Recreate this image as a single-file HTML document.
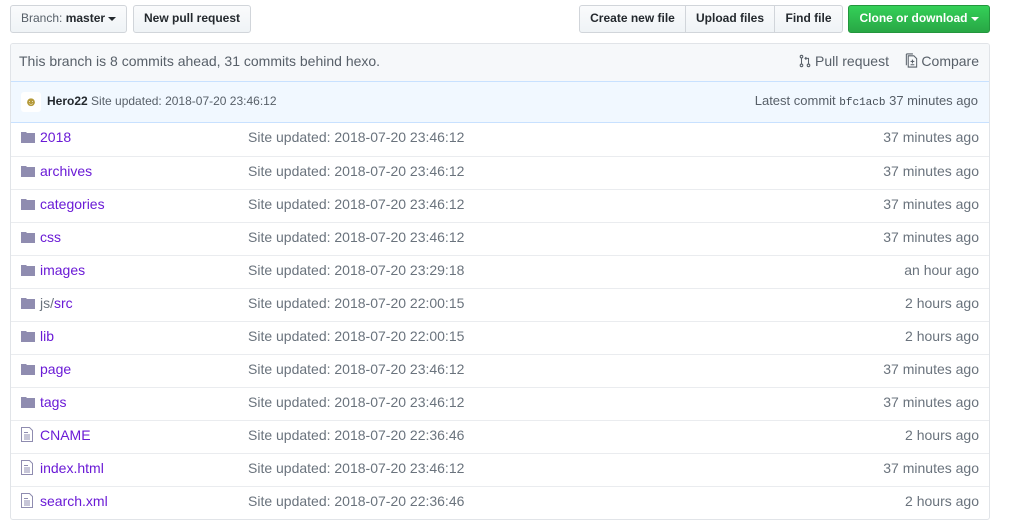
<!DOCTYPE html>
<html><head><meta charset="utf-8"><style>
*{box-sizing:border-box;margin:0;padding:0}
body{width:1022px;height:524px;background:#fff;font-family:"Liberation Sans",sans-serif;font-size:14px;color:#24292e;position:relative;overflow:hidden}
.btn{position:absolute;top:5px;height:28px;border:1px solid #d1d5da;background:linear-gradient(#fafbfc,#eff3f6);font-size:12px;font-weight:bold;line-height:25px;padding:0 10px;border-radius:3px;color:#24292e;white-space:nowrap;text-align:center}
.caret{display:inline-block;width:0;height:0;border-left:4px solid transparent;border-right:4px solid transparent;border-top:4px solid currentColor;vertical-align:middle;margin-left:3px}
.box{position:absolute;left:10px;top:43px;width:980px;height:477px;border:1px solid #e1e4e8;border-radius:3px;overflow:hidden}
.bar1{height:38px;background:#f6f8fa;border-bottom:1px solid #c8e1ff;padding:0 8px;line-height:34px;color:#586069;position:relative}
.bar2{height:41px;background:#f1f8ff;padding:0 10px;line-height:38px;font-size:12px;color:#586069;border-bottom:1px solid #c8e1ff;position:relative}
.row{height:33px;border-top:1px solid #eaecef;position:relative;line-height:29px}
.row:first-of-type{border-top:none}
.ic{position:absolute;left:10px;top:8px}
.nm{position:absolute;left:29px;color:#6a1ad6}
.msg{position:absolute;left:237px;color:#6a737d}
.age{position:absolute;right:10px;color:#6a737d}
</style></head><body>
<div class="btn" style="left:10px;width:117px;font-weight:normal;color:#586069">Branch: <b style="color:#24292e">master</b><span class="caret" style="color:#24292e"></span></div>
<div class="btn" style="left:133px;width:118px">New pull request</div>
<div class="btn" style="left:579px;width:107px;border-radius:3px 0 0 3px;padding:0">Create new file</div>
<div class="btn" style="left:685px;width:90px;border-radius:0;padding:0">Upload files</div>
<div class="btn" style="left:774px;width:69px;border-radius:0 3px 3px 0;padding:0">Find file</div>
<div class="btn" style="left:848px;width:142px;background:linear-gradient(#34d058,#28a745);border-color:#23963d;color:#fff;padding:0">Clone or download<span class="caret"></span></div>
<div class="box">
<div class="bar1">This branch is 8 commits ahead, 31 commits behind hexo.
<span style="position:absolute;right:10px;top:0">
<svg width="12" height="14" viewBox="0 0 12 16" style="vertical-align:-2px" fill="none" stroke="#586069" stroke-width="1.2"><circle cx="2" cy="3" r="1.5"/><circle cx="2" cy="13" r="1.5"/><circle cx="10" cy="13" r="1.5"/><path d="M2 4.5v7M10 11.5V5H6M7.5 3.5L6 5l1.5 1.5"/></svg> Pull request&nbsp;&nbsp;&nbsp;
<svg width="13" height="15" viewBox="0 0 13 16" style="vertical-align:-2px" fill="none" stroke="#586069" stroke-width="1.1"><path d="M3 3h6l3 3v9H3zM1 1h7M1 1v12M7.5 7v4M5.5 9h4M5.5 12.5h4"/></svg> Compare</span></div>
<div class="bar2"><span style="display:inline-block;width:20px;height:20px;background:#fff;border-radius:3px;vertical-align:middle;margin-right:6px;text-align:center;line-height:20px;font-size:13px;color:#b59a3a">&#9787;</span><b style="color:#24292e">Hero22</b> Site updated: 2018-07-20 23:46:12
<span style="position:absolute;right:11px;top:0;font-size:13px">Latest commit <code style="font-family:'Liberation Mono',monospace;font-size:11px;color:#444d56">bfc1acb</code> 37 minutes ago</span></div>
<div>
<div class="row"><svg class="ic" width="14" height="12" viewBox="0 0 14 12"><path d="M0 1h5l1 1h8v10H0z" fill="#8f8cb0"/></svg><span class="nm">2018</span><span class="msg">Site updated: 2018-07-20 23:46:12</span><span class="age">37 minutes ago</span></div>
<div class="row"><svg class="ic" width="14" height="12" viewBox="0 0 14 12"><path d="M0 1h5l1 1h8v10H0z" fill="#8f8cb0"/></svg><span class="nm">archives</span><span class="msg">Site updated: 2018-07-20 23:46:12</span><span class="age">37 minutes ago</span></div>
<div class="row"><svg class="ic" width="14" height="12" viewBox="0 0 14 12"><path d="M0 1h5l1 1h8v10H0z" fill="#8f8cb0"/></svg><span class="nm">categories</span><span class="msg">Site updated: 2018-07-20 23:46:12</span><span class="age">37 minutes ago</span></div>
<div class="row"><svg class="ic" width="14" height="12" viewBox="0 0 14 12"><path d="M0 1h5l1 1h8v10H0z" fill="#8f8cb0"/></svg><span class="nm">css</span><span class="msg">Site updated: 2018-07-20 23:46:12</span><span class="age">37 minutes ago</span></div>
<div class="row"><svg class="ic" width="14" height="12" viewBox="0 0 14 12"><path d="M0 1h5l1 1h8v10H0z" fill="#8f8cb0"/></svg><span class="nm">images</span><span class="msg">Site updated: 2018-07-20 23:29:18</span><span class="age">an hour ago</span></div>
<div class="row"><svg class="ic" width="14" height="12" viewBox="0 0 14 12"><path d="M0 1h5l1 1h8v10H0z" fill="#8f8cb0"/></svg><span class="nm"><span style="color:#6a737d">js/</span>src</span><span class="msg">Site updated: 2018-07-20 22:00:15</span><span class="age">2 hours ago</span></div>
<div class="row"><svg class="ic" width="14" height="12" viewBox="0 0 14 12"><path d="M0 1h5l1 1h8v10H0z" fill="#8f8cb0"/></svg><span class="nm">lib</span><span class="msg">Site updated: 2018-07-20 22:00:15</span><span class="age">2 hours ago</span></div>
<div class="row"><svg class="ic" width="14" height="12" viewBox="0 0 14 12"><path d="M0 1h5l1 1h8v10H0z" fill="#8f8cb0"/></svg><span class="nm">page</span><span class="msg">Site updated: 2018-07-20 23:46:12</span><span class="age">37 minutes ago</span></div>
<div class="row"><svg class="ic" width="14" height="12" viewBox="0 0 14 12"><path d="M0 1h5l1 1h8v10H0z" fill="#8f8cb0"/></svg><span class="nm">tags</span><span class="msg">Site updated: 2018-07-20 23:46:12</span><span class="age">37 minutes ago</span></div>
<div class="row"><svg class="ic" width="12" height="15" viewBox="0 0 12 15" style="top:6px" fill="none" stroke="#8f8cb0" stroke-width="1"><path d="M.5.5h8l3 3v11H.5zM3 5.5h4M3 8h6M3 10h6M3 12h6"/></svg><span class="nm">CNAME</span><span class="msg">Site updated: 2018-07-20 22:36:46</span><span class="age">2 hours ago</span></div>
<div class="row"><svg class="ic" width="12" height="15" viewBox="0 0 12 15" style="top:6px" fill="none" stroke="#8f8cb0" stroke-width="1"><path d="M.5.5h8l3 3v11H.5zM3 5.5h4M3 8h6M3 10h6M3 12h6"/></svg><span class="nm">index.html</span><span class="msg">Site updated: 2018-07-20 23:46:12</span><span class="age">37 minutes ago</span></div>
<div class="row"><svg class="ic" width="12" height="15" viewBox="0 0 12 15" style="top:6px" fill="none" stroke="#8f8cb0" stroke-width="1"><path d="M.5.5h8l3 3v11H.5zM3 5.5h4M3 8h6M3 10h6M3 12h6"/></svg><span class="nm">search.xml</span><span class="msg">Site updated: 2018-07-20 22:36:46</span><span class="age">2 hours ago</span></div>
</div>
</div>
</body></html>
